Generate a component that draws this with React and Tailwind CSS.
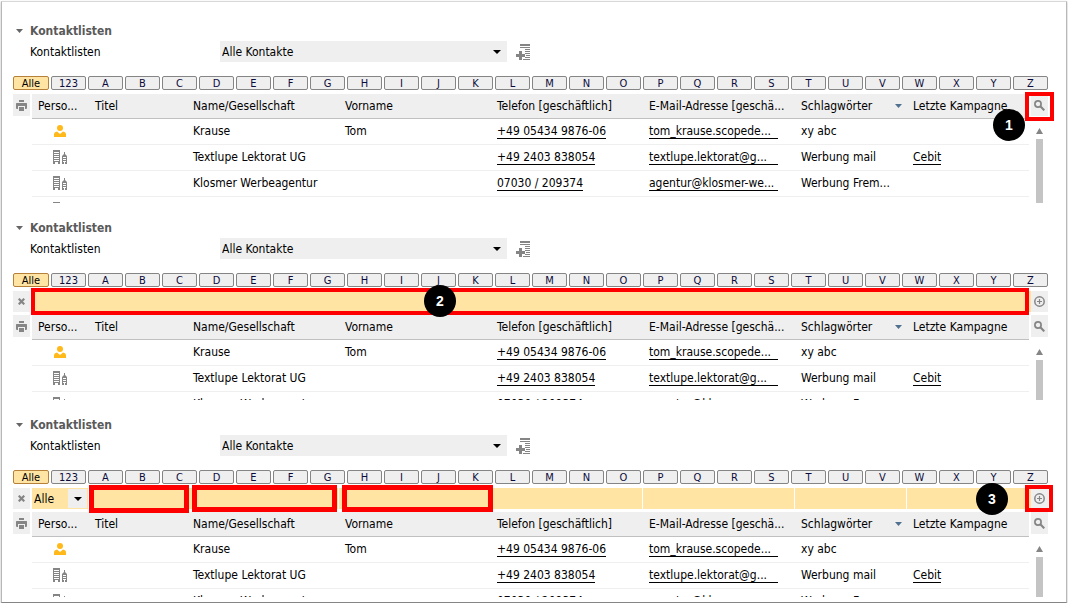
const FILTERS = ["123", ..."ABCDEFGHIJKLMNOPQRSTUVWXYZ"];

const HEADERS = [
  "Perso...",
  "Titel",
  "Name/Gesellschaft",
  "Vorname",
  "Telefon [geschäftlich]",
  "E-Mail-Adresse [geschä...",
  "Schlagwörter",
  "Letzte Kampagne",
];

const CONTACTS = [
  { kind: "person", name: "Krause", first: "Tom", phone: "+49 05434 9876-06", mail: "tom_krause.scopede...", tags: "xy abc", campaign: "" },
  { kind: "company", name: "Textlupe Lektorat UG", first: "", phone: "+49 2403 838054", mail: "textlupe.lektorat@g...", tags: "Werbung mail", campaign: "Cebit" },
  { kind: "company", name: "Klosmer Werbeagentur", first: "", phone: "07030 / 209374", mail: "agentur@klosmer-we...", tags: "Werbung Frem...", campaign: "" },
  { kind: "company", name: "", first: "", phone: "", mail: "", tags: "", campaign: "" },
];

function Down({ className }) {
  return (
    <svg viewBox="0 0 8 4" preserveAspectRatio="none" className={className} fill="currentColor" aria-hidden="true">
      <path d="M0 0h8L4 4z" />
    </svg>
  );
}

function PrinterIcon() {
  return (
    <svg viewBox="0 0 11 11" className="h-[11px] w-[11px]" fill="#858585" aria-hidden="true">
      <rect x="3" y="0" width="5" height="2" />
      <rect x="0" y="3" width="11" height="6" rx="1" />
      <path d="M2 6h7v3H2z" fill="#efefef" />
      <path d="M3 7h5v4H3z" />
      <path d="M0 3h11v3H0z" opacity="0.5" />
    </svg>
  );
}

function SearchIcon() {
  return (
    <svg viewBox="0 0 11 11" className="h-[11px] w-[11px]" fill="none" stroke="#858585" aria-hidden="true">
      <circle cx="4" cy="4" r="3.1" strokeWidth="1.7" />
      <path d="M6.300 6.300l4 4" strokeWidth="2.2" />
    </svg>
  );
}

function PlusCircleIcon() {
  return (
    <svg viewBox="0 0 11 11" className="h-[11px] w-[11px]" fill="none" stroke="#858585" aria-hidden="true">
      <circle cx="5.500" cy="5.500" r="4.700" strokeWidth="1.5" />
      <path d="M3 5.500h5M5.500 3v5" strokeWidth="1.2" />
    </svg>
  );
}

function CloseIcon() {
  return (
    <svg viewBox="0 0 7 7" className="h-[7px] w-[7px]" stroke="#858585" strokeWidth="2.2" aria-hidden="true">
      <path d="M.7.7l5.600 5.600M6.300.7L.7 6.300" />
    </svg>
  );
}

function AddListIcon() {
  return (
    <svg viewBox="0 0 15 19" className="h-[19px] w-[15px]" fill="#858585" aria-hidden="true">
      <path d="M4 2h10v2H4zM4 5h10v1H4zM9 7h5v1H9zM9 9h5v1H9zM9 11h5v1H9zM10 13h4v1h-4zM9 15h5v1H9zM7 17h7v1H7z" />
      <path d="M3 9h3v3h3v3H6v3H3v-3H0v-3h3z" />
    </svg>
  );
}

function PersonIcon() {
  return (
    <svg viewBox="0 0 12 12" className="h-3 w-3" fill="#ffb91a" aria-hidden="true">
      <circle cx="6" cy="3" r="3" />
      <path d="M0 12V9.500Q0 7 3 6.500l3 2.500 3-2.500q3 .5 3 3V12z" />
    </svg>
  );
}

function CompanyIcon() {
  return (
    <svg viewBox="0 0 14 14" className="h-[14px] w-[14px]" aria-hidden="true">
      <path fill="#858585" d="M0 0h7v14H5v-2H2v2H0zM11 2h1v2l2 2v8h-2v-2h-1v2H9V6l2-2z" />
      <path fill="#ffffff" d="M1 2h5v1H1zM1 4h5v1H1zM1 6h5v1H1zM1 8h5v1H1zM1 10h5v1H1zM10 7h3v1h-3zM10 9h3v1h-3zM10 11h3v1h-3z" />
    </svg>
  );
}

function Marker({ className, children }) {
  return (
    <span className={`absolute z-20 flex h-8 w-8 items-center justify-center rounded-full bg-black font-['Liberation_Sans',sans-serif] text-[14px] font-bold text-white ${className}`}>
      {children}
    </span>
  );
}

function Frame({ className }) {
  return <span className={`pointer-events-none absolute z-10 border-[#ff0000] ${className}`} />;
}

function IconButton({ label, className, children }) {
  return (
    <button type="button" aria-label={label} className={`flex w-[17px] items-center justify-center bg-[#efefef] ${className}`}>
      {children}
    </button>
  );
}

function CellLink({ href, wide, children }) {
  return (
    <a href={href} className={`inline-block border-b border-black align-middle leading-[14px] ${wide ? "w-[129px]" : ""}`}>
      {children}
    </a>
  );
}

function ContactTable() {
  return (
    <table className="w-full table-fixed border-collapse text-left whitespace-nowrap">
      <colgroup>
        <col className="w-[57px]" />
        <col className="w-[98px]" />
        <col className="w-[152px]" />
        <col className="w-[152px]" />
        <col className="w-[152px]" />
        <col className="w-[152px]" />
        <col className="w-[112px]" />
        <col />
      </colgroup>
      <thead>
        <tr className="h-6 border-b border-[#c0c0c0] bg-[#efefef]">
          {HEADERS.map((h) => (
            <th key={h} scope="col" className="p-0 pl-[6px] font-normal">
              {h === "Schlagwörter" ? (
                <span className="flex items-center justify-between pr-[5px]">
                  {h}
                  <Down className="h-1 w-[7px] text-[#50708f]" />
                </span>
              ) : (
                h
              )}
            </th>
          ))}
        </tr>
      </thead>
      <tbody>
        {CONTACTS.map((c, i) => (
          <tr key={i} className="h-[26px] border-b border-[#efefef]">
            <td className="p-0">
              <span className="flex justify-center pr-px">{c.kind === "person" ? <PersonIcon /> : <CompanyIcon />}</span>
            </td>
            <td className="p-0" />
            <td className="p-0 pl-[6px]">{c.name}</td>
            <td className="p-0 pl-[6px]">{c.first}</td>
            <td className="p-0 pl-[6px]">{c.phone && <CellLink href="#phone">{c.phone}</CellLink>}</td>
            <td className="p-0 pl-[6px]">{c.mail && <CellLink href="#mail" wide>{c.mail}</CellLink>}</td>
            <td className="p-0 pl-[6px]">{c.tags}</td>
            <td className="p-0 pl-[6px]">{c.campaign && <CellLink href="#campaign">{c.campaign}</CellLink>}</td>
          </tr>
        ))}
      </tbody>
    </table>
  );
}

function ColumnFilters() {
  return (
    <div className="grid h-full flex-1 grid-cols-[56px_97px_151px_151px_151px_151px_111px_1fr] gap-px">
      <div className="relative bg-[#ffe4a3]">
        <select aria-label="Personentyp" className="h-full w-full appearance-none bg-transparent pl-[2px] outline-none">
          <option>Alle</option>
        </select>
        <span className="pointer-events-none absolute inset-y-px right-px flex w-[19px] items-center justify-center bg-[#efefef]">
          <Down className="h-1 w-2 text-black" />
        </span>
      </div>
      {HEADERS.slice(1).map((h, i) => (
        <div key={h} className="relative">
          <input aria-label={h} className="block h-full w-full bg-[#ffe4a3] px-1 outline-none" />
          {i === 0 && <Frame className="-top-[3px] left-0 h-7 w-[100px] border-[5px]" />}
          {i === 1 && <Frame className="-top-[3px] left-[5px] h-[27px] w-[145px] border-[5px]" />}
          {i === 2 && <Frame className="-top-[3px] left-[3px] h-[27px] w-[151px] border-[5px]" />}
        </div>
      ))}
    </div>
  );
}

function FilterRow({ step }) {
  return (
    <div className="mb-[3px] flex h-[21px]">
      <IconButton label="Suche schließen" className="mr-[2px] h-full"><CloseIcon /></IconButton>
      {step === 2 ? (
        <div className="relative flex-1">
          <input aria-label="Suche" className="block h-full w-full bg-[#ffe4a3] px-2 outline-none" />
          <Frame className="-top-[3px] right-[2px] -left-px h-[27px] border-4" />
          <Marker className="-top-[6px] left-[392px]">2</Marker>
        </div>
      ) : (
        <ColumnFilters />
      )}
      <div className="relative">
        <IconButton label="Erweiterte Suche" className="h-full"><PlusCircleIcon /></IconButton>
        {step === 3 && (
          <>
            <Frame className="-top-[3px] -left-[6px] h-[27px] w-7 border-4" />
            <Marker className="-top-[5px] -left-[55px]">3</Marker>
          </>
        )}
      </div>
    </div>
  );
}

function ContactPanel({ step }) {
  const id = `list-${step}`;
  return (
    <section className="flex h-[183px] flex-col">
      <h2 className="flex h-[21px] items-center text-[12px] font-bold text-[#5a5a5a]">
        <button type="button" className="flex items-center pl-[3px]">
          <Down className="mr-[7px] h-1 w-[7px] text-[#666666]" />
          Kontaktlisten
        </button>
      </h2>
      <div className="flex h-[21px] items-center pl-[17px]">
        <label htmlFor={id} className="w-[190px]">Kontaktlisten</label>
        <div className="relative h-full w-[287px]">
          <select id={id} className="h-full w-full appearance-none bg-[#efefef] pl-[2px] outline-none">
            <option>Alle Kontakte</option>
          </select>
          <Down className="pointer-events-none absolute top-[9px] right-[6px] h-1 w-2 text-black" />
        </div>
        <button type="button" aria-label="Liste hinzufügen" className="ml-[9px]"><AddListIcon /></button>
      </div>
      <div className="mt-[14px] mb-1 flex h-[14px] shrink-0 gap-[2px] text-[11px] leading-[14px]">
        <button type="button" className="w-9 rounded-[2px] border border-[#b5813a] bg-[#ffe4a3]">Alle</button>
        {FILTERS.map((f) => (
          <button key={f} type="button" className="min-w-0 flex-1 rounded-[2px] border border-[#858585] bg-[#efefef] text-[#0b0b3b]">{f}</button>
        ))}
      </div>
      {step > 1 && <FilterRow step={step} />}
      <div className="flex min-h-0 flex-1 gap-[2px]">
        <IconButton label="Drucken" className="h-[22px] pt-px"><PrinterIcon /></IconButton>
        <div className="min-w-0 flex-1 overflow-hidden">
          <ContactTable />
        </div>
        <div className="relative flex flex-col items-center">
          <IconButton label="Suchen" className="h-[22px] shrink-0 pt-px"><SearchIcon /></IconButton>
          {step === 1 && (
            <>
              <Frame className="-top-[2px] -left-[6px] h-[29px] w-[29px] border-4" />
              <Marker className="top-[15px] -left-[38px]">1</Marker>
            </>
          )}
          <Down className="mt-3 mb-[5px] h-[6px] w-[7px] shrink-0 rotate-180 text-[#858585]" />
          <div className="w-[7px] flex-1 bg-[#c4c4c4]" />
        </div>
      </div>
    </section>
  );
}

export default function App() {
  return (
    <main className="bg-white p-px pb-0 font-['DejaVu_Sans_Condensed','Noto_Sans',sans-serif] text-[12px] leading-4 text-black">
      <div className="flex flex-col gap-[14px] border border-[#b8b8b8] border-t-[#d8d8d8] border-b-[#858585] pt-[18px] pr-[18px] pb-[5px] pl-[11px] shadow-[0_1px_2px_rgba(0,0,0,0.3)]">
        <ContactPanel step={1} />
        <ContactPanel step={2} />
        <ContactPanel step={3} />
      </div>
    </main>
  );
}
